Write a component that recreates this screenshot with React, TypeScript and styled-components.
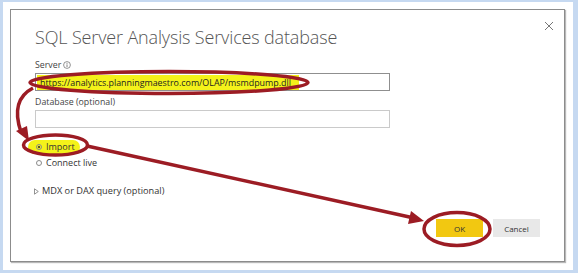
import React from "react";
import styled, { createGlobalStyle } from "styled-components";

const Global = createGlobalStyle`
  html, body { margin: 0; padding: 0; }
  body { font-family: "Open Sans", "Noto Sans", "Liberation Sans", sans-serif; }
`;

const Page = styled.div`
  position: relative;
  width: 578px;
  height: 273px;
  box-sizing: border-box;
  background: #c6d9f1;
  padding: 2px 5px 3px 3px;
  display: flex;
`;

const Frame = styled.div`
  flex: 1;
  background: #ffffff;
  padding: 7px 8px 8px 7px;
  display: flex;
`;

const Dialog = styled.div`
  position: relative;
  flex: 1;
  border: 1px solid #8c8c8c;
  box-shadow: 1px 1px 1px #b8b8b8;
  background: #fff;
  display: flex;
  flex-direction: column;
  padding: 0 24px 0 24px;
`;

const Close = styled.div`
  position: absolute;
  top: 5px;
  right: 9px;
  width: 12px;
  height: 12px;
`;

const Title = styled.h1`
  margin: 15px 0 0 0;
  font-weight: 300;
  font-size: 18px;
  line-height: 24px;
  color: #555;
  letter-spacing: -0.15px;
`;

const Label = styled.div<{ $top: number }>`
  margin-top: ${(p) => p.$top}px;
  font-size: 8.8px;
  line-height: 12px;
  color: #444;
  display: flex;
  align-items: center;
  gap: 2px;
`;

const Input = styled.div<{ $dark?: boolean }>`
  margin-top: 2px;
  width: 355px;
  height: 18px;
  box-sizing: border-box;
  border: 1px solid ${(p) => (p.$dark ? "#8f8f8f" : "#cacaca")};
  display: flex;
  align-items: center;
  padding-left: 1px;
  font-size: 8.9px;
  color: #222;
`;

const Highlight = styled.span`
  background: #f4f21a;
  padding: 2px 8px 2px 3px;
  line-height: 11px;
`;

const RadioRow = styled.div<{ $top: number; $hl?: boolean }>`
  margin-top: ${(p) => p.$top}px;
  display: flex;
  align-items: center;
  gap: 4px;
  font-size: 9px;
  line-height: 12px;
  color: #333;
  margin-left: ${(p) => (p.$hl ? -7 : 0)}px;
  padding: ${(p) => (p.$hl ? "1px 5px 1px 8px" : "0 0 0 1px")};
  background: ${(p) => (p.$hl ? "#f4f21a" : "transparent")};
  border-radius: 8px;
  align-self: flex-start;
`;

const Radio = styled.span<{ $on?: boolean }>`
  width: 6px;
  height: 6px;
  border-radius: 50%;
  border: 1px solid #8a8a8a;
  box-sizing: border-box;
  display: inline-flex;
  align-items: center;
  justify-content: center;
  &::after {
    content: "";
    width: 2px;
    height: 2px;
    border-radius: 50%;
    background: ${(p) => (p.$on ? "#222" : "transparent")};
  }
`;

const Expander = styled.div`
  margin-top: 16px;
  margin-left: -1px;
  display: flex;
  align-items: center;
  gap: 3px;
  font-size: 9.2px;
  line-height: 12px;
  color: #333;
`;

const Footer = styled.div`
  margin-top: auto;
  margin-bottom: 24px;
  display: flex;
  justify-content: flex-end;
  gap: 10px;
`;

const Button = styled.button<{ $primary?: boolean }>`
  width: 47px;
  height: 18px;
  border: none;
  padding: 0;
  font-family: inherit;
  font-size: 8px;
  color: #333;
  background: ${(p) => (p.$primary ? "#f2c811" : "#e8e8e8")};
`;

const Overlay = styled.svg`
  position: absolute;
  left: 0;
  top: 0;
  pointer-events: none;
`;

export default function App() {
  const red = "#9c1c24";
  return (
    <Page>
      <Global />
      <Frame>
        <Dialog>
          <Close>
            <svg width="12" height="12" viewBox="0 0 12 12">
              <path d="M2 2 L10 10 M10 2 L2 10" stroke="#777" strokeWidth="1" />
            </svg>
          </Close>
          <Title>SQL Server Analysis Services database</Title>
          <Label $top={10}>
            Server
            <svg width="8" height="8" viewBox="0 0 8 8">
              <circle cx="4" cy="4" r="3.4" fill="none" stroke="#666" strokeWidth="0.7" />
              <path d="M4 3.4 V6" stroke="#666" strokeWidth="0.8" />
              <circle cx="4" cy="2.3" r="0.5" fill="#666" />
            </svg>
          </Label>
          <Input $dark>
            <Highlight>https://analytics.planningmaestro.com/OLAP/msmdpump.dll</Highlight>
          </Input>
          <Label $top={5}>Database (optional)</Label>
          <Input />
          <RadioRow $top={12} $hl>
            <Radio $on />
            Import
          </RadioRow>
          <RadioRow $top={3}>
            <Radio />
            Connect live
          </RadioRow>
          <Expander>
            <svg width="5" height="7" viewBox="0 0 5 7">
              <path d="M0.5 0.8 L4.3 3.5 L0.5 6.2 Z" fill="none" stroke="#666" strokeWidth="0.7" />
            </svg>
            MDX or DAX query (optional)
          </Expander>
          <Footer>
            <Button $primary>OK</Button>
            <Button>Cancel</Button>
          </Footer>
        </Dialog>
      </Frame>
      <Overlay width="578" height="273" viewBox="0 0 578 273">
        <ellipse cx="169" cy="82.5" rx="139" ry="11" fill="none" stroke={red} strokeWidth="3.5" />
        <ellipse cx="55.5" cy="145" rx="32" ry="10" fill="none" stroke={red} strokeWidth="3.5" />
        <ellipse cx="457" cy="229" rx="33" ry="16.5" fill="none" stroke={red} strokeWidth="3.5" />
        <path d="M33 88 Q10 100 21 132" fill="none" stroke={red} strokeWidth="3.5" />
        <path d="M16 131 L29 141 L27 126 Z" fill={red} />
        <path d="M87 146 L414 218" fill="none" stroke={red} strokeWidth="3.5" />
        <path d="M411 211 L424 221 L408 224 Z" fill={red} />
      </Overlay>
    </Page>
  );
}
